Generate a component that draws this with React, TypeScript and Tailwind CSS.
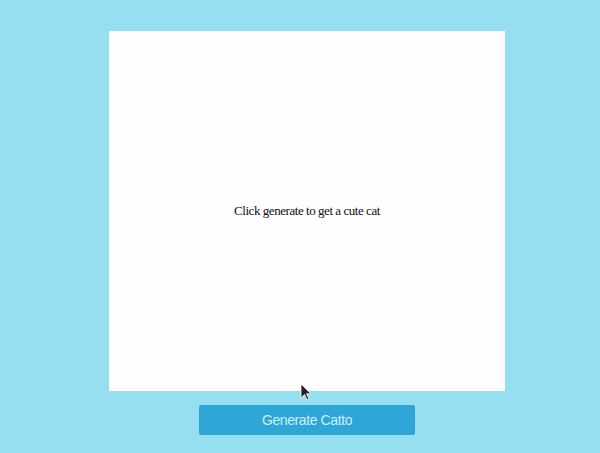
export default function App() {
  return (
    <div className="relative min-h-[453px] w-full bg-[#95dff0] flex flex-col items-center pl-[14px] pt-[31px]">
      {/* cat frame */}
      <div className="w-[396px] h-[360px] bg-[#fefdff] flex items-center justify-center">
        <p className="text-[13px] tracking-[-0.45px] text-[#111] font-['Liberation_Serif',serif]">
          Click generate to get a cute cat
        </p>
      </div>

      {/* button */}
      <button className="mt-[14px] w-[216px] h-[30px] rounded-[2px] bg-[#2fa6d8] text-[#caf0fb] text-[14px] tracking-[-0.4px] font-['Liberation_Sans',Arial,sans-serif]">
        Generate Catto
      </button>

      {/* mouse cursor */}
      <svg
        className="absolute left-[300px] top-[383px]"
        width="12"
        height="18"
        viewBox="0 0 12 18"
      >
        <path d="M1 1 L1 15 L4.5 11.5 L7 17 L9 16 L6.5 10.8 L11 10.8 Z" fill="#222" stroke="#fff" strokeWidth="0.8" />
      </svg>
    </div>
  );
}
